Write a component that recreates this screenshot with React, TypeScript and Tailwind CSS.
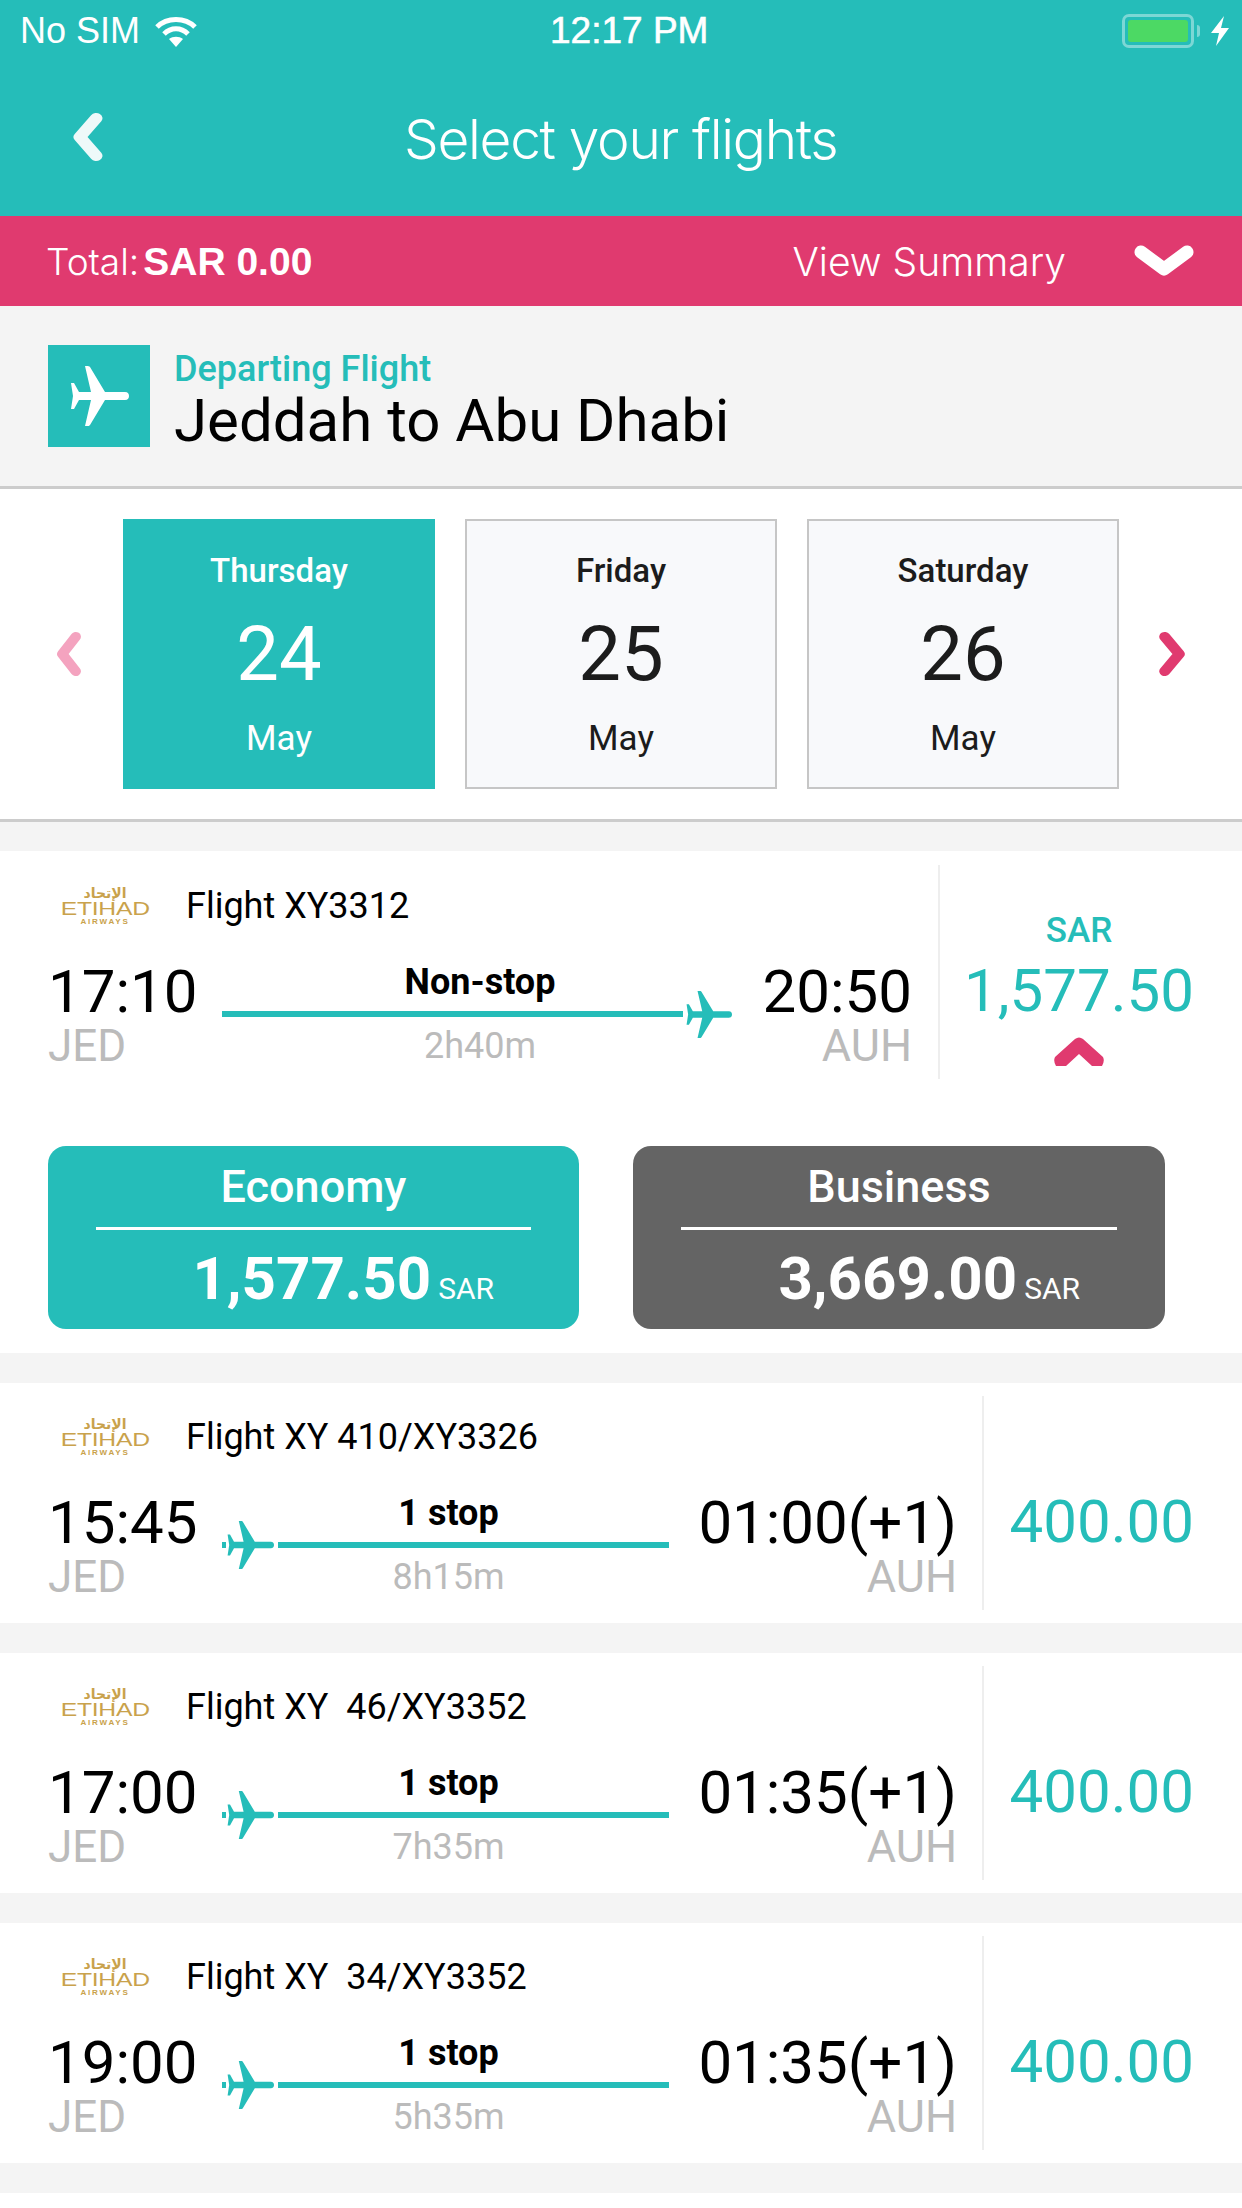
import React from 'react';

const PLANE = 'M56 26C59 26 60 28 60 30C60 32 59 34 56 34L36 34L21 59C20.5 60 19 60 18 60L16 60L22 34L10 34L5 43L2 43L4 30L2 17L5 17L10 26L22 26L16 0L18 0C19 0 20.5 0 21 1L36 26Z';

function Plane({ className }: { className: string }) {
  return (
    <svg viewBox="0 0 60 60" className={className} fill="currentColor">
      <path d={PLANE} />
    </svg>
  );
}

function ChevronSide({ className, dir }: { className: string; dir: 'left' | 'right' }) {
  return (
    <svg viewBox="0 0 27 48" className={className} fill="none" stroke="currentColor" strokeWidth="10" strokeLinecap="round" strokeLinejoin="round" preserveAspectRatio="none">
      <path d={dir === 'left' ? 'M20 6 L7 24 L20 42' : 'M7 6 L20 24 L7 42'} />
    </svg>
  );
}

function StatusBar() {
  return (
    <div className="flex items-center h-[62px] pl-[20px] pr-[13px] text-white font-['Liberation_Sans',sans-serif] text-[36px]">
      <span>No SIM</span>
      <svg viewBox="0 0 42 31" className="w-[42px] h-[31px] ml-[15px]" fill="none" stroke="currentColor">
        <path d="M2 11 C12 1 30 1 40 11" strokeWidth="5" />
        <path d="M9 18 C16 11 26 11 33 18" strokeWidth="5" />
        <path d="M21 31 L14 23 C18 20 24 20 28 23 Z" fill="currentColor" stroke="none" />
      </svg>
      <span className="ml-[353px] text-[37px] [-webkit-text-stroke:0.6px_white]">12:17 PM</span>
      <div className="ml-auto flex items-center">
        <div className="w-[72px] h-[34px] border-[3px] border-white/40 rounded-[7px] p-[3px]">
          <div className="w-full h-full bg-[#4cd964] rounded-[3px]" />
        </div>
        <div className="w-[3px] h-[12px] ml-[3px] bg-white/40 rounded-r-[3px]" />
        <svg viewBox="0 0 18 30" className="w-[18px] h-[30px] ml-[11px]" fill="currentColor">
          <path d="M13 0 L0 17 L8 17 L5 30 L18 12 L10 12 Z" />
        </svg>
      </div>
    </div>
  );
}

function Header() {
  return (
    <div className="bg-[#25bdb9] h-[216px] text-white">
      <StatusBar />
      <div className="flex items-center h-[154px] pl-[71px]">
        <ChevronSide dir="left" className="w-[34px] h-[50px] -mt-[4px] text-[#eef9f9]" />
        <span className="ml-[299px] font-['Inter',sans-serif] font-light text-[55px] leading-[60px] tracking-[-1.3px] whitespace-nowrap">Select your flights</span>
      </div>
    </div>
  );
}

function TotalBar() {
  return (
    <div className="bg-[#e03a6f] h-[90px] flex items-center pl-[46px] pr-[48px] text-white">
      <span className="mt-[2px] font-['Inter',sans-serif] font-light text-[37px]">Total:</span>
      <span className="mt-[2px] ml-[4px] font-['Liberation_Sans',sans-serif] font-bold text-[39px]">SAR 0.00</span>
      <span className="ml-auto mt-[3px] font-['Inter',sans-serif] font-light text-[39px]">View Summary</span>
      <svg viewBox="0 0 60 33" className="ml-[68px] w-[60px] h-[33px]" fill="none" stroke="currentColor" strokeWidth="13" strokeLinecap="round" strokeLinejoin="round">
        <path d="M7 7 L30 24 L53 7" />
      </svg>
    </div>
  );
}

function RouteTitle() {
  return (
    <div className="bg-[#f4f4f4] h-[183px] border-b-[3px] border-[#cccccc] pt-[39px] pl-[48px] flex items-start">
      <div className="w-[102px] h-[102px] bg-[#25bdb9] flex items-center justify-center text-white">
        <Plane className="w-[60px] h-[60px]" />
      </div>
      <div className="ml-[24px] pt-[4px]">
        <div className="font-medium text-[36px] leading-[40px] text-[#25bdb9]">Departing Flight</div>
        <div className="mt-[2px] text-[60px] leading-[60px] text-black">Jeddah to Abu Dhabi</div>
      </div>
    </div>
  );
}

function DayCard({ day, num, active }: { day: string; num: string; active?: boolean }) {
  return (
    <div
      className={
        active
          ? 'w-[312px] h-[270px] pt-[32px] flex flex-col items-center bg-[#25bdb9] text-white'
          : 'w-[312px] h-[270px] pt-[30px] flex flex-col items-center bg-[#f8f9fb] border-2 border-[#c6c6c6] text-[#1c1c1c]'
      }
    >
      <div className="font-medium text-[33px] leading-[40px]">{day}</div>
      <div className="mt-[21px] text-[76px] leading-[84px]">{num}</div>
      <div className="mt-[21px] text-[35px] leading-[44px]">May</div>
    </div>
  );
}

function DateStrip() {
  return (
    <div className="bg-white h-[333px] border-b-[3px] border-[#cccccc] pl-[55px] flex items-start pt-[30px]">
      <div className="h-[270px] flex items-center">
        <ChevronSide dir="left" className="w-[28px] h-[46px] text-[#f4a3bf]" />
      </div>
      <div className="ml-[40px] flex gap-[30px]">
        <DayCard day="Thursday" num="24" active />
        <DayCard day="Friday" num="25" />
        <DayCard day="Saturday" num="26" />
      </div>
      <div className="h-[270px] ml-[38px] flex items-center">
        <ChevronSide dir="right" className="w-[30px] h-[46px] text-[#e03a6f]" />
      </div>
    </div>
  );
}

function EtihadLogo() {
  return (
    <div className="w-[88px] h-[41px] flex flex-col items-center text-[#c9a24c] leading-none">
      <span className="font-['DejaVu_Sans',sans-serif] font-bold text-[14px] leading-[14px] h-[14px]">الإتحاد</span>
      <span className="font-['Liberation_Sans',sans-serif] text-[19px] leading-[17px] h-[17px] scale-x-[1.3] tracking-[-0.2px]">ETIHAD</span>
      <span className="font-['Liberation_Sans',sans-serif] font-bold text-[8px] leading-[10px] tracking-[1.8px]">AIRWAYS</span>
    </div>
  );
}

type Flight = {
  no: string;
  dep: string;
  arr: string;
  stop: string;
  dur: string;
  price: string;
};

function FlightRow({ f, nonstop }: { f: Flight; nonstop?: boolean }) {
  return (
    <div className="h-[240px] flex">
      <div className={nonstop ? 'w-[938px] pl-[48px] pr-[26px] pt-[34px]' : 'w-[982px] pl-[48px] pr-[25px] pt-[34px]'}>
        <div className="h-[40px] flex items-center">
          <div className="ml-[13px]"><EtihadLogo /></div>
          <span className="ml-[37px] text-[36px] text-black whitespace-pre">{f.no}</span>
        </div>
        <div className="mt-[36px] flex">
          <div className="w-[174px]">
            <div className="text-[60px] leading-[60px] text-black">{f.dep}</div>
            <div className="text-[44px] leading-[48px] text-[#bbbbbb]">JED</div>
          </div>
          <div className={nonstop ? 'w-[510px] flex flex-col items-center' : 'w-[447px] flex flex-col items-center'}>
            <div className="font-bold text-[36px] leading-[40px] text-black pl-[6px]">{f.stop}</div>
            <div className="mt-[9px] h-[6px] w-full flex items-center text-[#25bdb9]">
              {nonstop ? (
                <>
                  <div className="flex-1 h-[6px] bg-[#25bdb9]" />
                  <Plane className="ml-[2px] w-[47px] h-[47px] shrink-0" />
                </>
              ) : (
                <>
                  <div className="w-[4px] h-[6px] bg-[#25bdb9]" />
                  <Plane className="w-[48px] h-[48px] shrink-0" />
                  <div className="ml-[4px] flex-1 h-[6px] bg-[#25bdb9]" />
                </>
              )}
            </div>
            <div className="mt-[9px] text-[36px] leading-[40px] text-[#bbbbbb] pl-[6px]">{f.dur}</div>
          </div>
          <div className="flex-1 flex flex-col items-end">
            <div className="text-[60px] leading-[60px] text-black whitespace-nowrap">{f.arr}</div>
            <div className="text-[45px] leading-[48px] text-[#bbbbbb]">AUH</div>
          </div>
        </div>
      </div>
      <div className="w-[2px] my-[13px] bg-[#eeeeee]" />
      <div className="flex-1 pr-[48px] flex justify-end">
        {nonstop ? (
          <div className="flex flex-col items-center pt-[59px]">
            <div className="font-medium text-[35px] leading-[40px] text-[#25bdb9]">SAR</div>
            <div className="mt-[10px] text-[60px] leading-[60px] text-[#25bdb9]">{f.price}</div>
            <svg viewBox="0 0 50 29" className="mt-[16px] w-[50px] h-[29px] text-[#e03a6f]" fill="currentColor">
              <path d="M21 2 Q25 -1 29 2 L49 20 Q51 24 48 29 L38 29 L25 17 L12 29 L2 29 Q-1 24 1 20 Z" />
            </svg>
          </div>
        ) : (
          <div className="pt-[109px] text-[60px] leading-[60px] text-[#25bdb9]">{f.price}</div>
        )}
      </div>
    </div>
  );
}

function FareButton({ name, price, active }: { name: string; price: string; active?: boolean }) {
  return (
    <div className={active ? 'w-[531px] h-[183px] rounded-[18px] bg-[#25bdb9] text-white px-[48px]' : 'w-[532px] h-[183px] rounded-[18px] bg-[#646464] text-white px-[48px]'}>
      <div className="h-[81px] flex items-center justify-center font-medium text-[45px]">{name}</div>
      <div className="h-[3px] bg-white" />
      <div className="mt-[19px] flex items-baseline justify-end pr-[37px]">
        <span className="font-bold text-[60px] leading-[60px]">{price}</span>
        <span className="ml-[7px] text-[30px] leading-[40px]">SAR</span>
      </div>
    </div>
  );
}

const others: Flight[] = [
  { no: 'Flight XY 410/XY3326', dep: '15:45', arr: '01:00(+1)', stop: '1 stop', dur: '8h15m', price: '400.00' },
  { no: 'Flight XY  46/XY3352', dep: '17:00', arr: '01:35(+1)', stop: '1 stop', dur: '7h35m', price: '400.00' },
  { no: 'Flight XY  34/XY3352', dep: '19:00', arr: '01:35(+1)', stop: '1 stop', dur: '5h35m', price: '400.00' },
];

export default function App() {
  return (
    <div className="w-[1242px] h-[2208px] overflow-hidden bg-[#f4f4f4] font-['Roboto',sans-serif]">
      <Header />
      <TotalBar />
      <RouteTitle />
      <DateStrip />
      <div className="pt-[29px] flex flex-col gap-[30px]">
        <div className="bg-white h-[502px] pt-[1px]">
          <FlightRow
            nonstop
            f={{ no: 'Flight XY3312', dep: '17:10', arr: '20:50', stop: 'Non-stop', dur: '2h40m', price: '1,577.50' }}
          />
          <div className="mt-[54px] pl-[48px] flex gap-[54px]">
            <FareButton name="Economy" price="1,577.50" active />
            <FareButton name="Business" price="3,669.00" />
          </div>
        </div>
        {others.map((f) => (
          <div key={f.no} className="bg-white">
            <FlightRow f={f} />
          </div>
        ))}
        <div className="bg-white h-[60px]" />
      </div>
    </div>
  );
}
